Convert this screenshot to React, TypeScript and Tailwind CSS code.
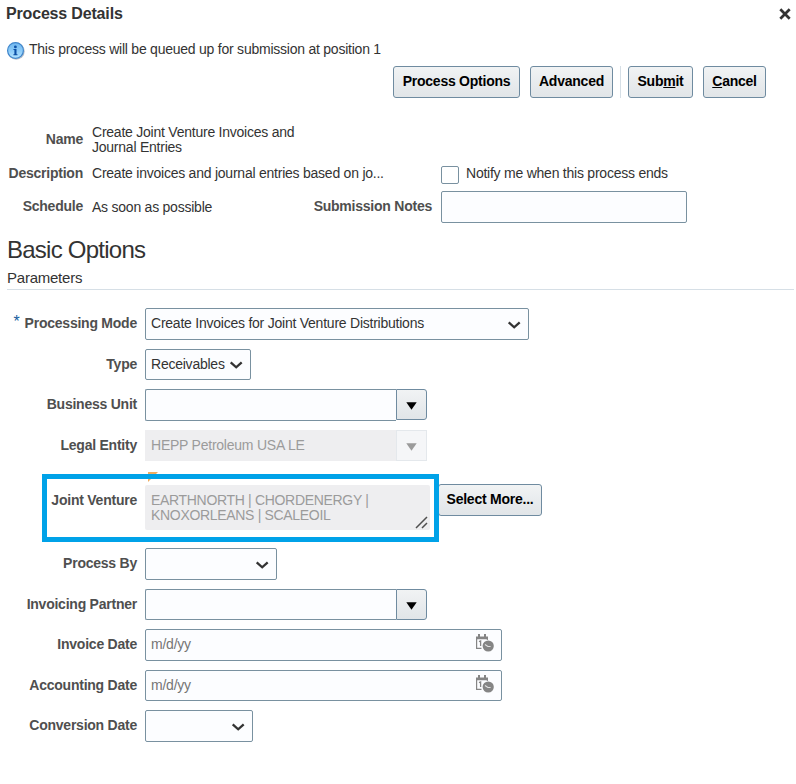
import type { ReactNode } from "react"

function Button({ children, className }: { children: ReactNode; className: string }) {
  return (
    <button
      className={`h-8 shrink-0 rounded-[3px] border border-[#6f8ba0] bg-linear-to-b from-[#f1f3f4] to-[#e1e5e8] pb-0.5 text-center text-sm font-bold tracking-[-0.24px] whitespace-nowrap text-black ${className}`}
    >
      {children}
    </button>
  )
}

function Chevron() {
  return (
    <svg width="14" height="8" viewBox="0 0 14 8" fill="none" className="mt-px shrink-0">
      <path d="M1.7 1.4 L7.2 6.3 L12.7 1.4" stroke="#333" strokeWidth="2.3" />
    </svg>
  )
}

function InfoIcon() {
  return (
    <svg width="19" height="19" viewBox="0 0 19 19" className="shrink-0">
      <defs>
        <linearGradient id="info" x1="0" y1="0" x2="0" y2="1">
          <stop offset="0" stopColor="#6fb6ee" />
          <stop offset="0.5" stopColor="#8ccbf8" />
          <stop offset="1" stopColor="#b5e4ff" />
        </linearGradient>
      </defs>
      <circle cx="10.2" cy="10.3" r="8.5" fill="#8b95a3" opacity="0.6" />
      <circle cx="9.5" cy="9.5" r="7.9" fill="url(#info)" stroke="#3f86cc" strokeWidth="1.2" />
      <circle cx="9.4" cy="5.9" r="1.4" fill="#0b4fa5" />
      <path d="M7.5 8H10.5V13.2H11.5V14.2H7.4V13.2H8.4V9H7.5Z" fill="#0b4fa5" />
    </svg>
  )
}

function CalendarIcon() {
  return (
    <svg width="19" height="19" viewBox="0 0 19 19" fill="none" className="mt-[3px] shrink-0">
      <path d="M1 3.4H13V6.2H1Z M3 1H5V4H3Z M9 1H11V4H9Z" fill="#858585" />
      <path d="M1.6 4V15.3H6.5 M12.4 5V7" stroke="#858585" strokeWidth="1.2" />
      <path d="M4 8.7L5.6 8V13" stroke="#858585" strokeWidth="1.3" />
      <circle cx="13.2" cy="13" r="6.2" fill="#fcfdff" />
      <circle cx="13.2" cy="13" r="5.6" fill="#858585" />
      <path d="M10 11.5L12.9 13.5H15.6" stroke="#e0e0e0" strokeWidth="1.2" />
    </svg>
  )
}

function Row({ label, required, className, children }: { label: string; required?: boolean; className: string; children: ReactNode }) {
  return (
    <div className={`flex items-stretch ${className}`}>
      <div className="mr-2 flex w-[137px] shrink-0 items-center justify-end pb-px font-bold whitespace-nowrap text-[#4f4f4f]">
        {required && <span className="mr-[5px] pb-1 text-base font-normal text-[#145c9e]">*</span>}
        {label}
      </div>
      {children}
    </div>
  )
}

function Select({ value, className }: { value?: string; className: string }) {
  return (
    <div className={`flex items-center justify-between rounded-xs border border-[#7991a0] bg-[#fcfdff] pr-[7px] pl-[5px] ${className}`}>
      <span className="pb-px">{value}</span>
      <Chevron />
    </div>
  )
}

function Combo({ value, disabled }: { value?: string; disabled?: boolean }) {
  return (
    <div className="flex w-[282px]">
      <div
        className={`flex w-[251px] items-center pb-px pl-1.5 ${
          disabled ? "bg-[#eeeef0] text-[#9b9b9b]" : "rounded-l-xs border border-r-0 border-[#7991a0] bg-[#fcfdff]"
        }`}
      >
        {value}
      </div>
      <div
        className={`flex h-[31px] w-[31px] items-center justify-center border ${
          disabled
            ? "border-[#e4e8ec] bg-[#f5f6f8] text-[#9b9b9b]"
            : "rounded-r-[3px] border-[#6f8ba0] bg-linear-to-b from-[#f1f3f4] to-[#e1e5e8] text-black"
        }`}
      >
        <svg width="11" height="8" viewBox="0 0 11 8" className="mt-0.5">
          <path d="M0.3 0.3H10.7L5.5 7.8Z" fill="currentColor" />
        </svg>
      </div>
    </div>
  )
}

function DateField() {
  return (
    <div className="flex w-[357px] items-start justify-between rounded-xs border border-[#7991a0] bg-[#fcfdff] pr-[7px] pl-[5px] text-[#757575]">
      <span className="pt-[7px]">m/d/yy</span>
      <CalendarIcon />
    </div>
  )
}

export default function App() {
  return (
    <div className="h-[784px] w-[796px] overflow-hidden bg-white font-['Liberation_Sans',Arial,sans-serif] text-sm leading-[15px] tracking-[-0.235px] text-[#333]">
      <div className="flex h-7 items-center justify-between pr-[5px] pl-1.5 text-base font-bold tracking-[-0.17px]">
        <h1>Process Details</h1>
        <svg width="12" height="12" viewBox="0 0 12 12">
          <path d="M1.3 1.3L10.7 10.7M10.7 1.3L1.3 10.7" stroke="#333" strokeWidth="2.7" />
        </svg>
      </div>

      <div className="mt-[13px] flex h-[19px] items-center gap-1 pl-1.5">
        <InfoIcon />
        <p className="pb-0.5">This process will be queued up for submission at position 1</p>
      </div>

      <div className="mt-1.5 flex pl-[393px]">
        <Button className="w-[127px]">Process Options</Button>
        <Button className="ml-2.5 w-[83px]">Advanced</Button>
        <div className="mr-[7px] ml-[7px] h-8 w-px bg-[#d6dfe6]" />
        <Button className="w-[65px]">
          Sub<span className="underline">m</span>it
        </Button>
        <Button className="ml-2.5 w-[63px]">
          <span className="underline">C</span>ancel
        </Button>
      </div>

      <div className="mt-[27px] flex">
        <div className="w-[83px] text-right font-bold text-[#4f4f4f]">
          <div className="pt-[7px]">Name</div>
          <div className="pt-[19px]">Description</div>
          <div className="pt-[18px]">Schedule</div>
        </div>
        <div className="ml-[9px] w-[219px]">
          <div>
            Create Joint Venture Invoices and
            <br />
            Journal Entries
          </div>
          <div className="pt-[11px] whitespace-nowrap">Create invoices and journal entries based on jo...</div>
          <div className="pt-[19px]">As soon as possible</div>
        </div>
        <div className="pt-[41px]">
          <div className="flex h-[18px] items-center pl-[130px]">
            <div className="h-[18px] w-[18px] rounded-xs border border-[#7991a0] bg-white" />
            <span className="ml-[7px] pb-[3px]">Notify me when this process ends</span>
          </div>
          <div className="mt-[7px] flex h-8">
            <div className="mr-[9px] w-[121px] pt-2 text-right font-bold whitespace-nowrap text-[#4f4f4f]">Submission Notes</div>
            <div className="w-[246px] rounded-xs border border-[#7991a0] bg-[#fcfdff]" />
          </div>
        </div>
      </div>

      <h2 className="mt-[13px] pl-[7px] text-2xl leading-7 tracking-[-0.75px]">Basic Options</h2>
      <h3 className="mr-0.5 ml-[7px] h-[26px] border-b border-[#d6dfe6] pt-[5px] text-[15px] leading-[17px]">Parameters</h3>

      <div className="mt-[18px] flex flex-col gap-[9px]">
        <Row label="Processing Mode" required className="h-8">
          <Select value="Create Invoices for Joint Venture Distributions" className="w-[384px]" />
        </Row>
        <Row label="Type" className="h-[31px]">
          <Select value="Receivables" className="w-[106px]" />
        </Row>
        <Row label="Business Unit" className="h-8">
          <Combo />
        </Row>
        <Row label="Legal Entity" className="h-[31px]">
          <Combo value="HEPP Petroleum USA LE" disabled />
        </Row>

        <div className="relative flex h-[69px] pt-[14px]">
          <div className="mr-2 w-[137px] pt-[9px] text-right font-bold text-[#4f4f4f]">Joint Venture</div>
          <div className="relative mt-px h-[45px] w-[285px] rounded-xs bg-[#eeeef0] pt-2 pl-1.5 tracking-[-0.32px] text-[#9b9b9b]">
            EARTHNORTH | CHORDENERGY |
            <br />
            KNOXORLEANS | SCALEOIL
            {/* Resize grip */}
            <svg width="13" height="13" viewBox="0 0 13 13" className="absolute right-[2px] bottom-[1px]">
              <path d="M1 12L12 1M7 12L12 7" stroke="#4f4f4f" strokeWidth="1.5" />
            </svg>
          </div>
          <Button className="ml-2 w-[104px]">Select More...</Button>
          <svg width="10" height="10" viewBox="0 0 10 10" className="absolute top-[2px] left-[148px]">
            <path d="M0 0H10L0 10Z" fill="#f0ad60" />
          </svg>
          {/* Highlight frame around the field */}
          <div className="absolute top-[4px] left-[42px] h-[68px] w-[397px] border-[5px] border-[#00a2e8]" />
        </div>

        <Row label="Process By" className="h-8">
          <Select className="w-[132px]" />
        </Row>
        <Row label="Invoicing Partner" className="h-[31px]">
          <Combo />
        </Row>
        <Row label="Invoice Date" className="h-8">
          <DateField />
        </Row>
        <Row label="Accounting Date" className="h-[31px]">
          <DateField />
        </Row>
        <Row label="Conversion Date" className="h-8">
          <Select className="w-[108px]" />
        </Row>
      </div>
    </div>
  )
}
